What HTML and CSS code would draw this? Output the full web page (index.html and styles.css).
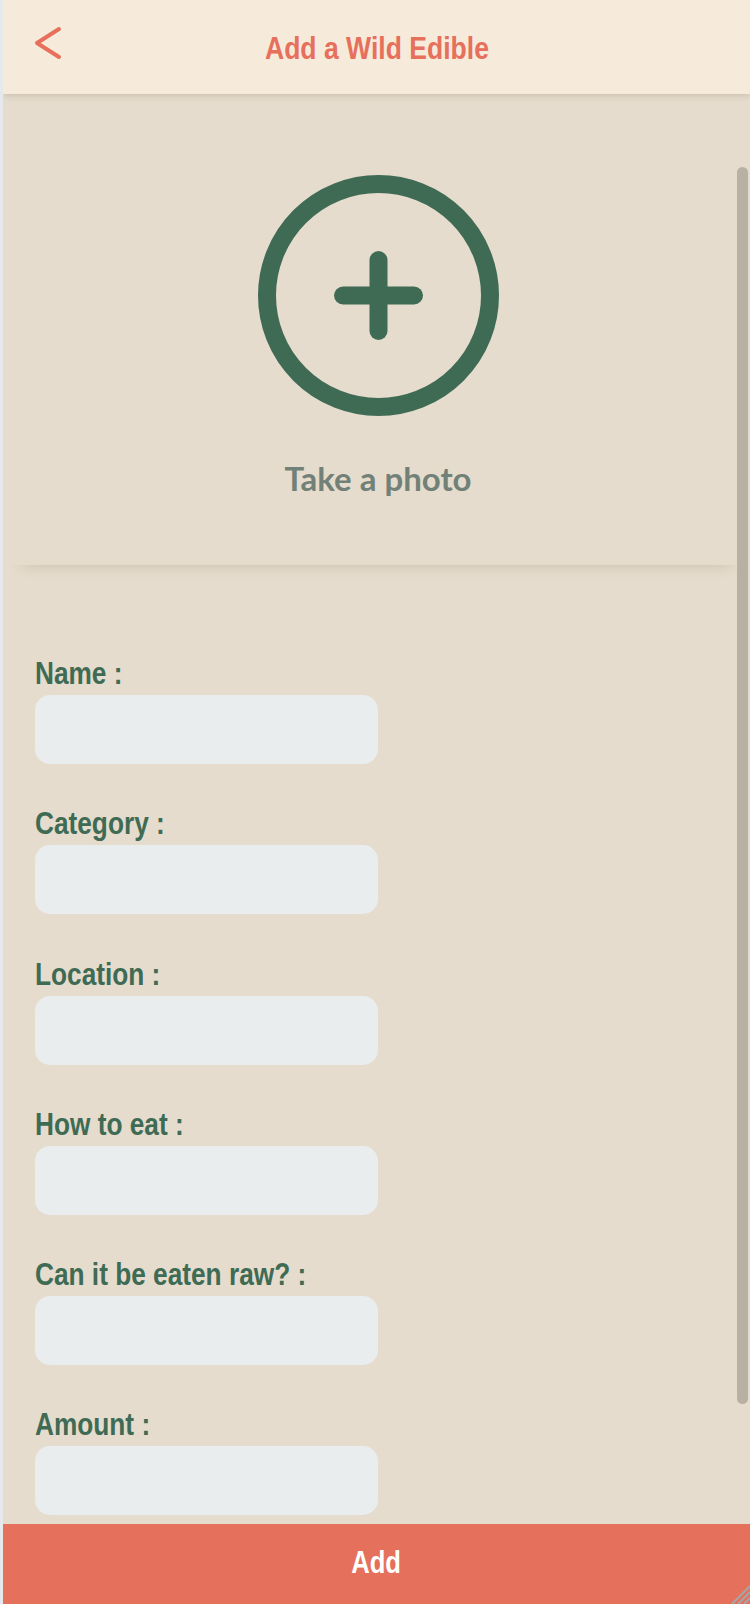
FILE: index.html
```html
<!DOCTYPE html>
<html lang="en">
<head>
<meta charset="utf-8">
<title>Add a Wild Edible</title>
<link rel="stylesheet" href="styles.css">
</head>
<body>
<div class="app">
  <header class="topbar">
    <button class="back" aria-label="Back">
      <svg width="32" height="44" viewBox="0 0 32 44"><polyline points="28,4 6,18 28,32" fill="none" stroke="#e6705c" stroke-width="4" stroke-linecap="round" stroke-linejoin="round"/></svg>
    </button>
    <h1 class="title">Add a Wild Edible</h1>
    <span class="spacer"></span>
  </header>

  <main class="content">
    <section class="photo">
      <svg class="photo-icon" width="241" height="241" viewBox="0 0 241 241">
        <circle cx="120.5" cy="120.5" r="111.5" fill="none" stroke="#3f6b55" stroke-width="18"/>
        <line x1="85" y1="120.5" x2="156" y2="120.5" stroke="#3f6b55" stroke-width="18" stroke-linecap="round"/>
        <line x1="120.5" y1="85" x2="120.5" y2="156" stroke="#3f6b55" stroke-width="18" stroke-linecap="round"/>
      </svg>
      <p class="photo-label">Take a photo</p>
    </section>

    <form class="form">
      <div class="field"><label class="label">Name :</label><div class="input"></div></div>
      <div class="field"><label class="label">Category :</label><div class="input"></div></div>
      <div class="field"><label class="label">Location :</label><div class="input"></div></div>
      <div class="field"><label class="label">How to eat :</label><div class="input"></div></div>
      <div class="field"><label class="label">Can it be eaten raw? :</label><div class="input"></div></div>
      <div class="field"><label class="label">Amount :</label><div class="input"></div></div>
    </form>
  </main>

  <footer class="footer"><span class="footer-text">Add</span></footer>

  <div class="scroll-thumb"></div>
  <svg class="grip" width="26" height="26" viewBox="0 0 26 26">
    <line x1="26" y1="8" x2="8" y2="26" stroke="#a4a7a6" stroke-width="2"/>
    <line x1="26" y1="14" x2="14" y2="26" stroke="#a4a7a6" stroke-width="2"/>
    <line x1="26" y1="20" x2="20" y2="26" stroke="#a4a7a6" stroke-width="2"/>
  </svg>
</div>
</body>
</html>
```

FILE: styles.css
```css
html, body {
  margin: 0;
  padding: 0;
}
body {
  background: #e5dccd;
  font-family: "Liberation Sans", Arial, sans-serif;
}
.app {
  position: relative;
  width: 747px;
  height: 1604px;
  border-left: 3px solid #e6e9eb;
  background: #e5dccd;
  display: flex;
  flex-direction: column;
  overflow: hidden;
}
.topbar {
  flex: none;
  height: 94px;
  background: #f6eadb;
  display: grid;
  grid-template-columns: 1fr auto 1fr;
  align-items: center;
  box-shadow: 0 2px 6px rgba(80, 60, 30, 0.16);
  position: relative;
  z-index: 2;
}
.back {
  justify-self: start;
  background: none;
  border: 0;
  padding: 0 0 0 28px;
  margin: 0;
  height: 44px;
  display: flex;
}
.title {
  margin: 0;
  font-size: 32px;
  line-height: 36px;
  font-weight: 700;
  color: #e6705c;
  padding-top: 1px;
  transform: scaleX(0.83);
  white-space: nowrap;
}
.content {
  flex: none;
}
.photo {
  padding: 81px 0 69px 3px;
  display: flex;
  flex-direction: column;
  align-items: center;
  box-shadow: 0 18px 14px -20px rgba(90, 70, 40, 0.26);
}
.photo-icon {
  display: block;
}
.photo-label {
  margin: 44px 0 0;
  font-family: Lato, "Liberation Sans", sans-serif;
  font-weight: 700;
  font-size: 33px;
  line-height: 36px;
  color: #728178;
}
.form {
  padding: 88px 0 0 32px;
}
.field {
  display: flex;
  flex-direction: column;
  align-items: flex-start;
  margin-bottom: 39.25px;
}
.field:last-child {
  margin-bottom: 0;
}
.label {
  font-size: 32px;
  line-height: 36px;
  font-weight: 700;
  color: #3f6b55;
  padding-top: 2px;
  margin-bottom: 4px;
  transform: scaleX(0.82);
  transform-origin: left center;
  white-space: nowrap;
}
.input {
  width: 343px;
  height: 69px;
  border-radius: 15px;
  background: #e9edee;
}
.footer {
  flex: none;
  box-sizing: border-box;
  height: 80px;
  background: #e5705c;
  color: #ffffff;
  text-align: center;
  font-size: 32px;
  line-height: 36px;
  font-weight: 700;
  padding-top: 20px;
  margin-top: auto;
}
.footer-text {
  display: inline-block;
  transform: scaleX(0.8);
}
.scroll-thumb {
  position: absolute;
  left: 734px;
  top: 167px;
  width: 11px;
  height: 1237px;
  border-radius: 6px;
  background: #b9b0a4;
}
.grip {
  position: absolute;
  right: 0;
  bottom: 0;
}
```
